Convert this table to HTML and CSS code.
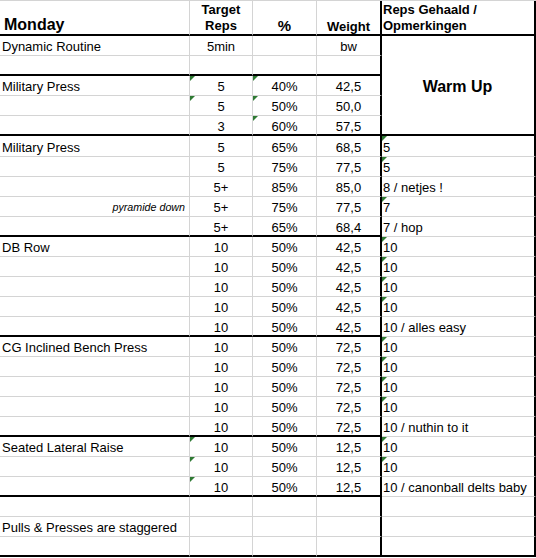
FILE: index.html
```html
<!DOCTYPE html>
<html>
<head>
<meta charset="utf-8">
<link rel="stylesheet" href="styles.css">
</head>
<body>
<div class="sheet">
  <div class="c hd tb"><span class="day">Monday</span></div>
  <div class="c hd tb ctr"><span class="two">Target<br>Reps</span></div>
  <div class="c hd tb ctr"><span class="pct">%</span></div>
  <div class="c hd tb ctr d"><span class="wt">Weight</span></div>
  <div class="c hd tb e"><span class="two">Reps Gehaald /<br>Opmerkingen</span></div>

  <div class="c">Dynamic Routine</div><div class="c ctr">5min</div><div class="c"></div><div class="c ctr d">bw</div>
  <div class="c e warm tb">Warm Up</div>

  <div class="c tb"></div><div class="c tb"></div><div class="c tb"></div><div class="c tb d"></div>

  <div class="c">Military Press</div><div class="c ctr tri">5</div><div class="c ctr tri">40%</div><div class="c ctr d">42,5</div>
  <div class="c"></div><div class="c ctr tri">5</div><div class="c ctr tri">50%</div><div class="c ctr d">50,0</div>
  <div class="c tb"></div><div class="c ctr tb">3</div><div class="c ctr tb tri">60%</div><div class="c ctr tb d">57,5</div>

  <div class="c">Military Press</div><div class="c ctr">5</div><div class="c ctr">65%</div><div class="c ctr d">68,5</div><div class="c e tri">5</div>
  <div class="c"></div><div class="c ctr">5</div><div class="c ctr">75%</div><div class="c ctr d">77,5</div><div class="c e tri">5</div>
  <div class="c"></div><div class="c ctr">5+</div><div class="c ctr">85%</div><div class="c ctr d">85,0</div><div class="c e">8 / netjes !</div>
  <div class="c note">pyramide down</div><div class="c ctr">5+</div><div class="c ctr">75%</div><div class="c ctr d">77,5</div><div class="c e tri">7</div>
  <div class="c tb"></div><div class="c ctr tb">5+</div><div class="c ctr tb">65%</div><div class="c ctr tb d">68,4</div><div class="c e">7 / hop</div>

  <div class="c">DB Row</div><div class="c ctr">10</div><div class="c ctr">50%</div><div class="c ctr d">42,5</div><div class="c e tri">10</div>
  <div class="c"></div><div class="c ctr">10</div><div class="c ctr">50%</div><div class="c ctr d">42,5</div><div class="c e tri">10</div>
  <div class="c"></div><div class="c ctr">10</div><div class="c ctr">50%</div><div class="c ctr d">42,5</div><div class="c e tri">10</div>
  <div class="c"></div><div class="c ctr">10</div><div class="c ctr">50%</div><div class="c ctr d">42,5</div><div class="c e tri">10</div>
  <div class="c tb"></div><div class="c ctr tb">10</div><div class="c ctr tb">50%</div><div class="c ctr tb d">42,5</div><div class="c e">10 / alles easy</div>

  <div class="c">CG Inclined Bench Press</div><div class="c ctr">10</div><div class="c ctr">50%</div><div class="c ctr d">72,5</div><div class="c e tri">10</div>
  <div class="c"></div><div class="c ctr">10</div><div class="c ctr">50%</div><div class="c ctr d">72,5</div><div class="c e tri">10</div>
  <div class="c"></div><div class="c ctr">10</div><div class="c ctr">50%</div><div class="c ctr d">72,5</div><div class="c e tri">10</div>
  <div class="c"></div><div class="c ctr">10</div><div class="c ctr">50%</div><div class="c ctr d">72,5</div><div class="c e tri">10</div>
  <div class="c tb"></div><div class="c ctr tb">10</div><div class="c ctr tb">50%</div><div class="c ctr tb d">72,5</div><div class="c e">10 / nuthin to it</div>

  <div class="c">Seated Lateral Raise</div><div class="c ctr tri">10</div><div class="c ctr">50%</div><div class="c ctr d">12,5</div><div class="c e tri">10</div>
  <div class="c"></div><div class="c ctr tri">10</div><div class="c ctr">50%</div><div class="c ctr d">12,5</div><div class="c e tri">10</div>
  <div class="c tb"></div><div class="c ctr tb tri">10</div><div class="c ctr tb">50%</div><div class="c ctr tb d">12,5</div><div class="c e">10 / canonball delts baby</div>

  <div class="c"></div><div class="c"></div><div class="c"></div><div class="c d"></div><div class="c e"></div>
  <div class="c">Pulls &amp; Presses are staggered</div><div class="c"></div><div class="c"></div><div class="c d"></div><div class="c e"></div>
  <div class="c tb"></div><div class="c tb"></div><div class="c tb"></div><div class="c tb d"></div><div class="c tb e"></div>
</div>
</body>
</html>
```

FILE: styles.css
```css
html, body {
  margin: 0;
  padding: 0;
  background: #ffffff;
}

body {
  font-family: "Liberation Sans", Arial, sans-serif;
  font-size: 13px;
  color: #000000;
}

.sheet {
  display: grid;
  grid-template-columns: 190px 63px 64px 65px 154px;
  grid-template-rows: 35px repeat(5, 20px) 21px repeat(20, 20px);
  border-top: 1px solid #d4d4d4;
  width: 536px;
}

.c {
  box-sizing: border-box;
  position: relative;
  display: flex;
  align-items: flex-end;
  padding: 0 2px 1px 2px;
  line-height: 15px;
  white-space: nowrap;
  border-right: 1px solid #d4d4d4;
  border-bottom: 1px solid #d4d4d4;
}

.ctr {
  justify-content: center;
}

.d {
  border-right: 2px solid #000000;
}

.e {
  border-right: 2px solid #000000;
  padding-left: 1px;
}

.tb {
  border-bottom: 2px solid #000000;
  padding-bottom: 0;
}

.tri::before {
  content: "";
  position: absolute;
  top: 0;
  left: 0;
  width: 0;
  height: 0;
  border-top: 5px solid #2f7a34;
  border-right: 5px solid transparent;
}

.hd {
  font-weight: bold;
}

.day {
  font-size: 16px;
  line-height: 18px;
  padding-left: 2px;
}

.two {
  line-height: 16px;
}

.ctr .two {
  text-align: center;
}

.pct {
  font-size: 15px;
  line-height: 16px;
}

.wt {
  line-height: 15px;
}

.warm {
  grid-row: span 5;
  justify-content: center;
  align-items: center;
  padding-top: 3px;
  font-size: 16px;
  font-weight: bold;
}

.note {
  justify-content: flex-end;
  padding-right: 4px;
  font-size: 10.7px;
  font-style: italic;
}
```
